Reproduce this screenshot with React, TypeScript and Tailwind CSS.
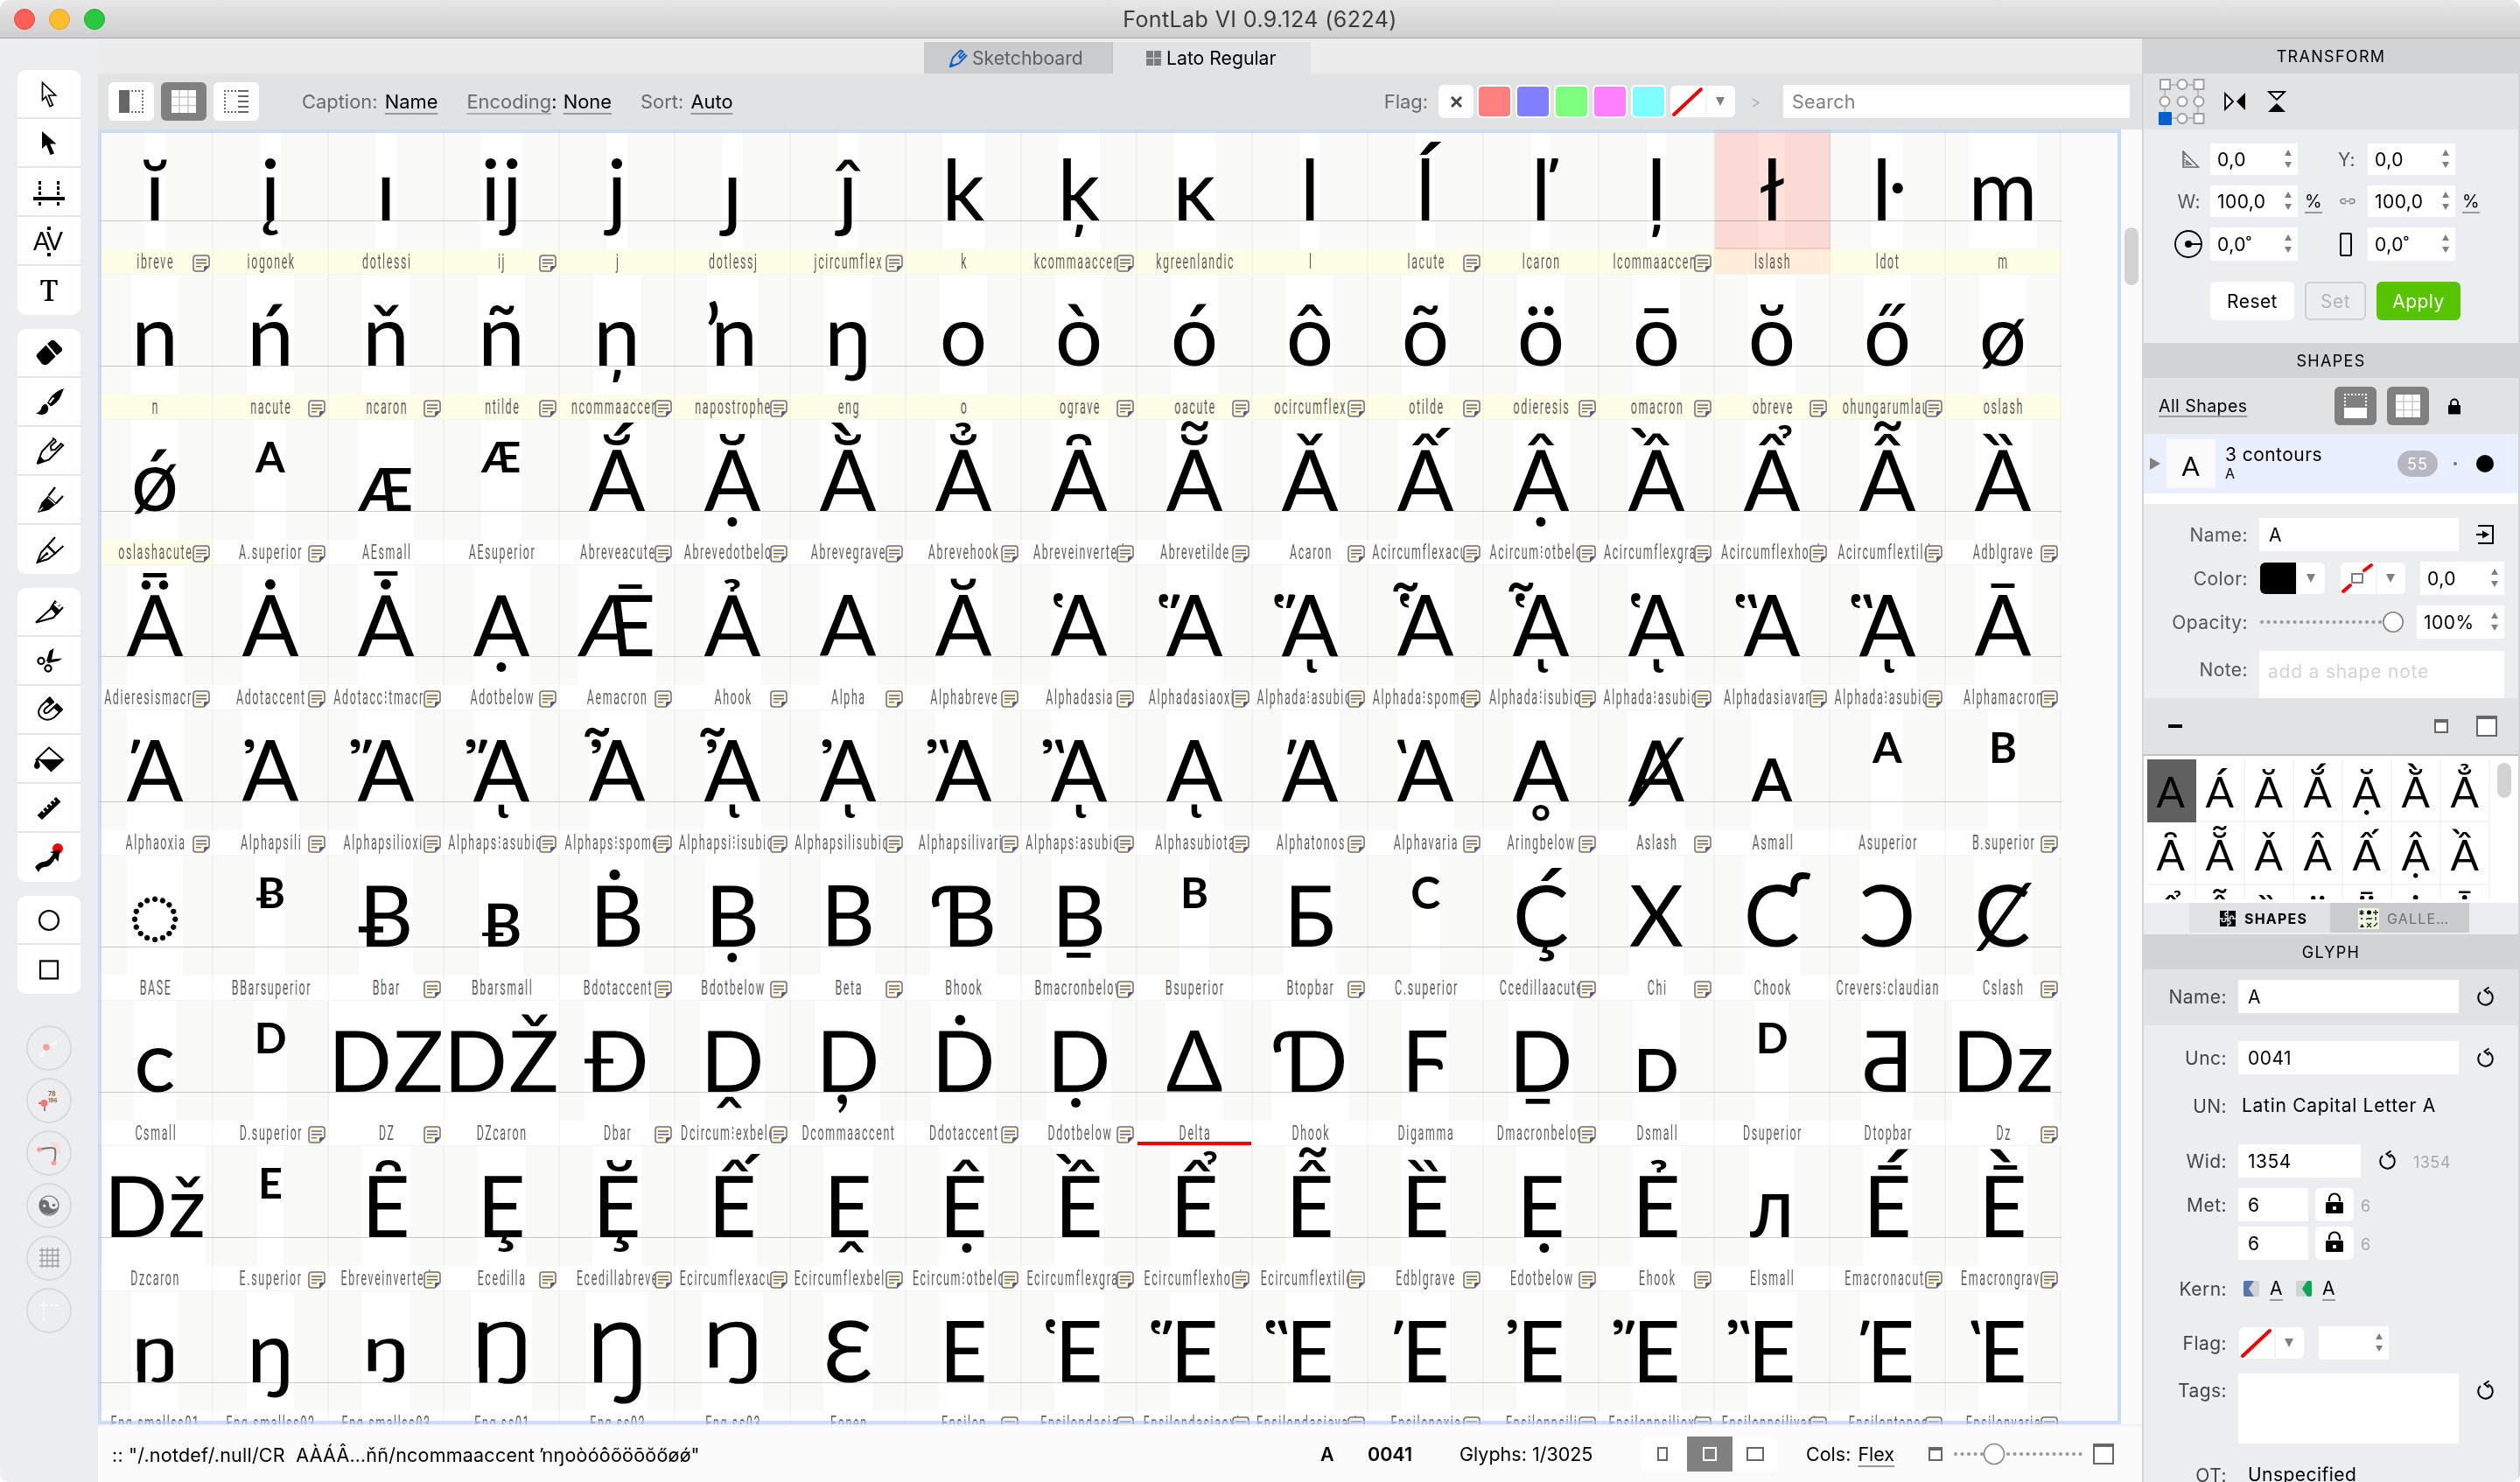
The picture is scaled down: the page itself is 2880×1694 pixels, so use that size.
import React from "react";

type Kind = "sup" | "ring" | "eng1" | "eng3" | "Eng1" | "Eng2" | "Eng3";
type Cell = { g: string; n: string; note?: boolean; kind?: Kind };

const c = (g: string, n: string, note = 0, kind?: Kind): Cell => ({ g, n, note: !!note, kind });

const ROWS: Cell[][] = [
  [
    c("ĭ", "ibreve", 1), c("į", "iogonek"), c("ı", "dotlessi"), c("ĳ", "ij", 1), c("j", "j"), c("ȷ", "dotlessj"),
    c("ĵ", "jcircumflex", 1), c("k", "k"), c("ķ", "kcommaaccent", 1), c("ĸ", "kgreenlandic"), c("l", "l"),
    c("ĺ", "lacute", 1), c("ľ", "lcaron"), c("ļ", "lcommaaccent", 1), c("ł", "lslash"), c("ŀ", "ldot"), c("m", "m"),
  ],
  [
    c("n", "n"), c("ń", "nacute", 1), c("ň", "ncaron", 1), c("ñ", "ntilde", 1), c("ņ", "ncommaaccent", 1),
    c("ŉ", "napostrophe", 1), c("ŋ", "eng"), c("o", "o"), c("ò", "ograve", 1), c("ó", "oacute", 1),
    c("ô", "ocircumflex", 1), c("õ", "otilde", 1), c("ö", "odieresis", 1), c("ō", "omacron", 1),
    c("ŏ", "obreve", 1), c("ő", "ohungarumlaut", 1), c("ø", "oslash"),
  ],
  [
    c("ǿ", "oslashacute", 1), c("ᴬ", "A.superior", 1), c("ᴁ", "AEsmall"), c("ᴭ", "AEsuperior"),
    c("Ắ", "Abreveacute", 1), c("Ặ", "Abrevedotbelow", 1), c("Ằ", "Abrevegrave", 1), c("Ẳ", "Abrevehook", 1),
    c("Ȃ", "Abreveinverted", 1), c("Ẵ", "Abrevetilde", 1), c("Ǎ", "Acaron", 1), c("Ấ", "Acircumflexacute", 1),
    c("Ậ", "Acircum⁝otbelow", 1), c("Ầ", "Acircumflexgrave", 1), c("Ẩ", "Acircumflexhook", 1),
    c("Ẫ", "Acircumflextilde", 1), c("Ȁ", "Adblgrave", 1),
  ],
  [
    c("Ǟ", "Adieresismacron", 1), c("Ȧ", "Adotaccent", 1), c("Ǡ", "Adotacc⁝tmacron", 1), c("Ạ", "Adotbelow", 1),
    c("Ǣ", "Aemacron", 1), c("Ả", "Ahook", 1), c("Α", "Alpha", 1), c("Ᾰ", "Alphabreve", 1), c("Ἁ", "Alphadasia", 1),
    c("Ἅ", "Alphadasiaoxia", 1), c("ᾍ", "Alphada⁝asubiota", 1), c("Ἇ", "Alphada⁝spomeni", 1),
    c("ᾏ", "Alphada⁝isubiota", 1), c("ᾉ", "Alphada⁝asubiota", 1), c("Ἃ", "Alphadasiavaria", 1),
    c("ᾋ", "Alphada⁝asubiota", 1), c("Ᾱ", "Alphamacron", 1),
  ],
  [
    c("\u1fbb", "Alphaoxia", 1), c("Ἀ", "Alphapsili", 1), c("Ἄ", "Alphapsilioxia", 1), c("ᾌ", "Alphaps⁝asubiota", 1),
    c("Ἆ", "Alphaps⁝spomeni", 1), c("ᾎ", "Alphapsi⁝isubiota", 1), c("ᾈ", "Alphapsilisubiota", 1),
    c("Ἂ", "Alphapsilivaria", 1), c("ᾊ", "Alphaps⁝asubiota", 1), c("ᾼ", "Alphasubiota", 1), c("Ά", "Alphatonos", 1),
    c("Ὰ", "Alphavaria", 1), c("Ḁ", "Aringbelow", 1), c("Ⱥ", "Aslash", 1), c("ᴀ", "Asmall"),
    c("ᴬ", "Asuperior"), c("ᴮ", "B.superior", 1),
  ],
  [
    c("◌", "BASE", 0, "ring"), c("ᴯ", "BBarsuperior"), c("Ƀ", "Bbar", 1), c("ᴃ", "Bbarsmall"),
    c("Ḃ", "Bdotaccent", 1), c("Ḅ", "Bdotbelow", 1), c("Β", "Beta", 1), c("Ɓ", "Bhook"), c("Ḇ", "Bmacronbelow", 1),
    c("ᴮ", "Bsuperior"), c("Ƃ", "Btopbar", 1), c("C", "C.superior", 0, "sup"), c("Ḉ", "Ccedillaacute", 1),
    c("Χ", "Chi", 1), c("Ƈ", "Chook"), c("Ↄ", "Crevers⁝claudian"), c("Ȼ", "Cslash", 1),
  ],
  [
    c("ᴄ", "Csmall"), c("ᴰ", "D.superior", 1), c("Ǳ", "DZ", 1), c("Ǆ", "DZcaron"), c("Đ", "Dbar", 1),
    c("Ḓ", "Dcircum⁝exbelow", 1), c("Ḑ", "Dcommaaccent"), c("Ḋ", "Ddotaccent", 1), c("Ḍ", "Ddotbelow", 1),
    c("Δ", "Delta"), c("Ɗ", "Dhook"), c("Ϝ", "Digamma"), c("Ḏ", "Dmacronbelow", 1), c("ᴅ", "Dsmall"),
    c("ᴰ", "Dsuperior"), c("Ƌ", "Dtopbar"), c("ǲ", "Dz", 1),
  ],
  [
    c("ǅ", "Dzcaron"), c("ᴱ", "E.superior", 1), c("Ȇ", "Ebreveinverted", 1), c("Ȩ", "Ecedilla", 1),
    c("Ḝ", "Ecedillabreve", 1), c("Ế", "Ecircumflexacute", 1), c("Ḙ", "Ecircumflexbelow", 1),
    c("Ệ", "Ecircum⁝otbelow", 1), c("Ề", "Ecircumflexgrave", 1), c("Ể", "Ecircumflexhook", 1),
    c("Ễ", "Ecircumflextilde", 1), c("Ȅ", "Edblgrave", 1), c("Ẹ", "Edotbelow", 1), c("Ẻ", "Ehook", 1),
    c("ᴫ", "Elsmall"), c("Ḗ", "Emacronacute", 1), c("Ḕ", "Emacrongrave", 1),
  ],
  [
    c("ŋ", "Eng.smallss01", 0, "eng1"), c("ŋ", "Eng.smallss02"), c("ŋ", "Eng.smallss03", 0, "eng3"),
    c("ŋ", "Eng.ss01", 0, "Eng1"), c("ŋ", "Eng.ss02", 0, "Eng2"), c("ŋ", "Eng.ss03", 0, "Eng3"), c("Ɛ", "Eopen"), c("Ε", "Epsilon", 1),
    c("Ἑ", "Epsilondasia", 1), c("Ἕ", "Epsilondasiaoxia", 1), c("Ἓ", "Epsilondasiavaria", 1), c("\u1fc9", "Epsilonoxia", 1),
    c("Ἐ", "Epsilonpsili", 1), c("Ἔ", "Epsilonpsilioxia", 1), c("Ἒ", "Epsilonpsilivaria", 1),
    c("Έ", "Epsilontonos", 1), c("Ὲ", "Epsilonvaria", 1),
  ],
];

const LATO = "font-['Lato','DejaVu_Sans',sans-serif]";

function NoteIcon() {
  return (
    <svg className="absolute right-[4px] top-[143px]" width="20" height="20" viewBox="0 0 20 20">
      <path d="M4 1h12a3 3 0 0 1 3 3v9l-6 6H4a3 3 0 0 1-3-3V4a3 3 0 0 1 3-3z" fill="#fdf6cf" stroke="#6b6a90" strokeWidth="1.500" />
      <path d="M19 13h-4.500a1.500 1.500 0 0 0-1.500 1.500V19z" fill="#565588" />
      <path d="M4 6h12M4 9.800h12M4 13.600h6" stroke="#65648f" strokeWidth="1.400" />
    </svg>
  );
}

/* Alternate forms of the Eng are built from the lowercase eng, stretched, and a dotless i for the long left stem. */
const SQUASH = "inline-block origin-top [-webkit-text-stroke:0.5px_black] [transform:translateY(14.2px)_scaleY(0.742)]";
const BIG_SQUASH = "inline-block origin-top font-light [-webkit-text-stroke:2.4px_black] [transform:translateY(-21.5px)_scale(1.34,1.035)]";
const BIG = "inline-block origin-top font-light [-webkit-text-stroke:2.2px_black] [transform:translateY(-38px)_scale(1.34,1.36)]";

function Glyph({ cell }: { cell: Cell }) {
  switch (cell.kind) {
    case "sup":
      return <span className="relative -top-[44px] text-[49px] [-webkit-text-stroke:1.8px_black]">{cell.g}</span>;
    case "ring":
      return <span className="[-webkit-text-stroke:0.8px_black]">{cell.g}</span>;
    case "eng1":
      return (
        <span className="relative inline-block">
          <span className={SQUASH}>{cell.g}</span>
          <span className="absolute left-0 top-0">ı</span>
        </span>
      );
    case "eng3":
      return <span className={SQUASH}>{cell.g}</span>;
    case "Eng1":
      return (
        <span className="relative mx-[9px] inline-block">
          <span className={BIG_SQUASH}>{cell.g}</span>
          <span className="absolute inset-0">
            <span className={`${BIG} w-full text-left`}>ı</span>
          </span>
        </span>
      );
    case "Eng2":
      return <span className={`${BIG} mx-[9px]`}>{cell.g}</span>;
    case "Eng3":
      return <span className={`${BIG_SQUASH} mx-[9px]`}>{cell.g}</span>;
    default:
      return <>{cell.g}</>;
  }
}

function GlyphCell({ cell, yellow, selected }: { cell: Cell; yellow: boolean; selected: boolean }) {
  return (
    <div className="relative h-[166px] w-[132px] shrink-0 overflow-hidden border-b border-[#f3f3f2] bg-[#f9f9f8]">
      <div className="flex h-[137px] justify-center border-r-2 border-[#f0f0ef]">
        <span className={`h-[137px] whitespace-nowrap bg-white text-[96px] leading-[134px] text-black ${LATO}`}>
          <Glyph cell={cell} />
        </span>
      </div>
      <div
        className={`flex h-[28px] items-center justify-center border-r-2 ${
          selected
            ? "border-[#fbe6d2] bg-[#ffecd9]"
            : yellow
              ? "border-[#f5f5df] bg-[#fefee6]"
              : "border-[#f7f7f7] bg-white"
        }`}
      >
        <span className="relative left-px top-px origin-center scale-x-[0.54] whitespace-nowrap font-['Roboto','DejaVu_Sans',sans-serif] text-[23px] leading-[28px] tracking-[3px] text-[#60605e]">
          {cell.n}
        </span>
      </div>
      <div className="absolute left-0 right-0 top-[104px] h-px bg-black/20" />
      {cell.note && <NoteIcon />}
      {cell.n === "Delta" && <div className="absolute bottom-0 left-0 right-[2px] h-[4px] bg-[#f40000]" />}
      {selected && (
        <div className="absolute inset-x-0 top-0 h-[137px] border-b-2 border-[#ffcdc6] bg-[#ffe0da] mix-blend-multiply" />
      )}
    </div>
  );
}

/* ---------- small shared pieces ---------- */

function Spin() {
  return (
    <svg className="-mt-[2px] ml-auto shrink-0" width="8" height="24" viewBox="0 0 8 24">
      <path d="M4 1l4 7H0zM4 22l4-7H0z" fill="#7f7f7f" />
    </svg>
  );
}

function Field({ value, className = "", spin = false }: { value: string; className?: string; spin?: boolean }) {
  return (
    <div
      className={`flex shrink-0 items-center bg-white pt-[2px] text-black ${spin ? "pl-[8px] pr-[7px]" : "pl-[11px]"} ${className}`}
    >
      {value}
      {spin && <Spin />}
    </div>
  );
}

function Reset({ className = "" }: { className?: string }) {
  return (
    <svg className={`shrink-0 ${className}`} width="22" height="24" viewBox="0 0 22 24">
      <path d="M5 7.200A8.300 8.300 0 1 0 13.500 5.600" fill="none" stroke="#000" strokeWidth="2" />
      <path d="M14.500 1.500L9.500 5l4.800 4" fill="none" stroke="#000" strokeWidth="2" />
    </svg>
  );
}

function Lock({ big = false }: { big?: boolean }) {
  return big ? (
    <svg width="20" height="25" viewBox="0 0 20 25">
      <path d="M4 10V7.500a6 6 0 0 1 12 0V10" fill="none" stroke="#000" strokeWidth="2.200" />
      <rect y="11" width="20" height="13" rx="1.500" />
      <rect x="8" y="16" width="4" height="4" rx="1" fill="#fff" />
    </svg>
  ) : (
    <svg width="14" height="19" viewBox="0 0 14 19">
      <path d="M3 9V5.500a4 4 0 0 1 8 0V9" fill="none" stroke="#000" strokeWidth="2" />
      <rect y="8" width="14" height="10.500" rx="1" />
    </svg>
  );
}

function NoneSwatch({ frame = false }: { frame?: boolean }) {
  return (
    <svg width="40" height="36" viewBox="0 0 40 36">
      <path d={frame ? "M3 33l8-7M27 9l8-6" : "M4 33L35 4"} stroke="#f40000" strokeWidth="4" strokeLinecap="round" />
      {frame && <rect x="13" y="13" width="12" height="10" fill="#fff" stroke="#7f7f7f" strokeWidth="2" />}
    </svg>
  );
}

function Drop({ children, className = "" }: { children: React.ReactNode; className?: string }) {
  return (
    <div className={`flex h-[36px] w-[74px] shrink-0 overflow-hidden rounded-[6px] bg-white ${className}`}>
      {children}
      <div className="flex flex-1 items-center justify-center border-l-2 border-[#f4f4f4] pr-[2px]">
        <svg width="10" height="10" viewBox="0 0 10 10">
          <path d="M0 0h10L5 10z" fill="#7f7f7f" />
        </svg>
      </div>
    </div>
  );
}

function GridGlyph() {
  return (
    <svg width="28" height="26" viewBox="0 0 28 26">
      <rect width="28" height="26" fill="#fff" />
      <path d="M9 0v26M19 0v26M0 8h28M0 17.500h28" stroke="#c9c9c9" strokeWidth="1.500" />
    </svg>
  );
}

function Win({ w, h }: { w: number; h: number }) {
  return (
    <svg className="shrink-0" width={w} height={h} viewBox={`0 0 ${w} ${h}`}>
      <rect x="1" y="1" width={w - 2} height={h - 2} fill="#fff" stroke="#666" strokeWidth="2" />
      <rect width={w} height="4" fill="#666" />
    </svg>
  );
}

function Header({ children }: { children: React.ReactNode }) {
  return (
    <div className="flex h-[40px] shrink-0 items-center justify-center bg-[#d2d3d5] pt-px text-[18px] tracking-[1.300px] text-black">
      {children}
    </div>
  );
}

/* ---------- left tool column ---------- */

const TOOLS: React.ReactNode[][] = [
  [
    <path d="M10.500 4.500v20l4-4 4.500 11 3.300-1.500L17.500 19h8z" fill="#fff" stroke="#000" strokeWidth="1.700" />,
    <path d="M10 4v20l5-4.500 4.500 11.500 4.500-1.500-4.800-11H26.500z" />,
    <>
      <path d="M0 25h36" stroke="#000" strokeWidth="4" />
      <path d="M7.500 5v28M28.500 5v28" stroke="#000" strokeWidth="3" strokeDasharray="4 2" />
    </>,
    <>
      <text x="0" y="28" fontSize="28" fontFamily="Lato, sans-serif" letterSpacing="-2.500">AV</text>
      <path d="M18 1v6M18 31v5" stroke="#000" strokeWidth="4" strokeDasharray="4 2" />
    </>,
    <text x="18" y="29" fontSize="33" fontWeight="500" textAnchor="middle" fontFamily="Noto Serif, DejaVu Serif, serif">T</text>,
  ],
  [
    <>
      <path d="M14.500 8.500L4.500 18.500Q2.500 21 5 23.500l5 6.500q4 2.500 7.500-.5l8-8z" />
      <path d="M16 7l4-3.500q2-1.500 4.500 0L32 11q2 2 .5 4.500L27 20z" />
    </>,
    <>
      <path d="M35 2Q26 5 20 12l-4 6.500 4 4Q27 19 31 12z" />
      <path d="M15 20q-4-.5-5.500 3.500Q9 28 3 30.500q9 3.500 13-1.500 2-3 1-6z" />
      <path d="M18.500 18.500l5-6" stroke="#fff" strokeWidth="2" />
    </>,
    <>
      <path d="M4.500 32L10 18 24 3.500M4.500 32L18 27.500 34 11M26.500 6L20 12l.5 4.500L25 16l7-7" fill="none" stroke="#000" strokeWidth="2" />
      <path d="M22 2.500l4 3M31 8.500l4 3" stroke="#000" strokeWidth="1.600" />
      <path d="M4 32.500L7.500 23l6 6z" />
    </>,
    <>
      <path d="M5 32L9.500 20.500 17 12.500l10 9L17.500 29z" />
      <path d="M25 3l-7.500 9.500M34 13l-8 8.500" stroke="#000" strokeWidth="2.200" />
      <path d="M7 30l4-4M17 15l8 7" stroke="#fff" strokeWidth="1.300" />
    </>,
    <>
      <path d="M4.500 32L9 20.500 16 13l9 8.500L17 28z" fill="#fff" stroke="#000" strokeWidth="2" />
      <path d="M25 3l-8.500 9.500 8.500 9L34.500 13M4.500 32l10-9.500" fill="none" stroke="#000" strokeWidth="2" />
      <circle cx="15.500" cy="22" r="1.800" />
    </>,
  ],
  [
    <>
      <path d="M3 29.500L21 13l5.500 7L23 24z" fill="#fff" stroke="#000" strokeWidth="2" />
      <path d="M20 13l5.500-8.500M27 20l7-8" stroke="#000" strokeWidth="2" />
      <path d="M20 13l3-4 8 7-4 4z" />
      <path d="M25 8l2-2M29 11l2-2" stroke="#000" strokeWidth="1.500" strokeDasharray="1 1" />
    </>,
    <>
      <path d="M15 18L18.500 6l5-3-3 15.500z" />
      <path d="M16 19l6-3.500 11-1-4 3L17 20z" />
      <circle cx="9" cy="17.500" r="3.600" fill="none" stroke="#000" strokeWidth="2.200" />
      <circle cx="17" cy="26" r="3.600" fill="none" stroke="#000" strokeWidth="2.200" />
    </>,
    <>
      <path d="M19 3.500l-10 9.500q-6 8 0 13 7 5.500 15 0l9-9-6-6-9.500 9q-3 2-4.500.5t.5-4.500l9.500-7.500z" fill="#fff" stroke="#000" strokeWidth="2" />
      <path d="M18.500 2.500l5 5-4 4-6-4.500zM28 11l6 6-4 4-6.500-5.500z" />
    </>,
    <>
      <path d="M4 18L18 4.500 34 18.500 20.500 31 8 18.500z" fill="#fff" stroke="#000" strokeWidth="2" />
      <path d="M7 18h27L20.500 32z" />
      <path d="M4 17.500q7 9 1 11.500-6-.5-3-7z" />
    </>,
    <>
      <path d="M4.500 26L26 5l5.500 5.500L10 31z" />
      <path d="M10 19.500l3 3M14 15.500l3 3M18 11.500l3 3M22 7.500l3 3" stroke="#fff" strokeWidth="1.800" />
    </>,
    <>
      <circle cx="28" cy="7" r="6" fill="#f40000" />
      <path d="M2 28q5-6 10-6 6-.5 11-9.500l-4-1.500L30.500 8l-2 14-3.500-4q-5 10-12 10-5 .5-7 6z" />
    </>,
  ],
  [
    <circle cx="18" cy="18" r="11" fill="none" stroke="#000" strokeWidth="2.200" />,
    <rect x="8" y="7.500" width="20" height="20" fill="none" stroke="#000" strokeWidth="2.200" />,
  ],
];

const ROUND: React.ReactNode[] = [
  <>
    <path d="M17 36q3-10 18-17" fill="none" stroke="#f8f8f8" strokeWidth="3" />
    <circle cx="23" cy="25" r="3.800" fill="#ff9c9a" />
  </>,
  <>
    <rect x="24" y="14" width="14" height="15" fill="#f7ecda" />
    <path d="M14 29h7v9" fill="none" stroke="#888" strokeWidth="2" />
    <circle cx="20.500" cy="29" r="4" fill="#fb7270" />
    <text x="25" y="21" fontSize="7" fontWeight="700" fill="#666" fontFamily="Inter">78</text>
    <text x="25" y="27.500" fontSize="6" fontWeight="700" fill="#666" fontFamily="Inter">196</text>
  </>,
  <>
    <path d="M26 14q14-4 13 14l-6-4z" fill="#f9dcd4" />
    <path d="M15 22q17-4 18 0 1 6-1 15" fill="none" stroke="#777" strokeWidth="2" />
    <circle cx="15" cy="22" r="2.800" fill="#ff9c9a" />
    <circle cx="31.500" cy="37.500" r="2.800" fill="#ff9c9a" />
  </>,
  <>
    <circle cx="26" cy="26" r="11" fill="#ecedf0" stroke="#777" strokeWidth="1.200" />
    <path d="M15.500 23a5.500 5.500 0 0 1 10.500 3 5.500 5.500 0 0 0 10.800-1A11 11 0 0 1 15 27z" fill="#6d6d6d" />
    <circle cx="20.700" cy="26.300" r="1.700" fill="#f4f4f4" />
    <circle cx="31.500" cy="25.500" r="1.700" fill="#6d6d6d" />
  </>,
  <path d="M15 17h23M15 23h23M15 29h23M15 35h23M18 14v23M24 14v23M30 14v23M36 14v23" stroke="#9d9d9d" strokeWidth="1.300" />,
  <path d="M15 20h24M20 15v24" stroke="#fafafa" strokeWidth="2" strokeDasharray="4 2" />,
];

function ToolColumn() {
  return (
    <div className="flex w-[112px] shrink-0 flex-col items-center bg-[#ecedf0] pt-[36px]">
      {TOOLS.map((group, i) => (
        <div key={i} className="mb-[16px] w-[72px] divide-y-2 divide-[#e4e4e5] overflow-hidden rounded-[10px] bg-white">
          {group.map((icon, k) => (
            <div key={k} className="flex h-[56px] items-center justify-center pt-[2px]">
              <svg width="36" height="36" viewBox="0 0 36 36">
                {icon}
              </svg>
            </div>
          ))}
        </div>
      ))}
      <div className="mt-[20px] flex flex-col gap-[8px]">
        {ROUND.map((icon, i) => (
          <svg key={i} width="52" height="52" viewBox="0 0 52 52">
            <circle cx="26" cy="26" r="25" fill="#ecedee" stroke="#d9d9da" strokeWidth="1.800" />
            {icon}
          </svg>
        ))}
      </div>
    </div>
  );
}

/* ---------- centre ---------- */

const LINK = "underline decoration-[#9a9a9a] decoration-2 underline-offset-[5px] text-black";

function Toolbar() {
  return (
    <div className="flex h-[64px] shrink-0 items-center bg-[#e1e2e4] pl-[12px] pr-[14px] text-[21.900px] text-[#6a6a6a]">
      <div className="flex gap-[8px]">
        <div className="flex h-[44px] w-[52px] items-center justify-center rounded-[6px] bg-white">
          <svg width="28" height="26" viewBox="0 0 28 26">
            <rect width="12" height="26" fill="#666" />
            <path d="M14 1h13v24H14" fill="none" stroke="#666" strokeWidth="1.800" strokeDasharray="2 2" />
          </svg>
        </div>
        <div className="flex h-[44px] w-[52px] items-center justify-center rounded-[6px] bg-[#808080]">
          <GridGlyph />
        </div>
        <div className="flex h-[44px] w-[52px] items-center justify-center rounded-[6px] bg-white">
          <svg width="28" height="26" viewBox="0 0 28 26">
            <path d="M14 1H1v24h13" fill="none" stroke="#666" strokeWidth="1.800" strokeDasharray="2 2" />
            <path d="M16 1h12M16 7h12M16 13h12M16 19h12M16 25h12" stroke="#666" strokeWidth="2" />
          </svg>
        </div>
      </div>
      <div className="ml-[49px] flex gap-[33px] pt-[1px]">
        <span>Caption: <span className={`ml-[2px] ${LINK}`}>Name</span></span>
        <span>
          <span className="underline decoration-[#b0b0b0] decoration-2 underline-offset-[5px]">Encoding</span>
          <span className="text-black">: </span>
          <span className={`ml-px ${LINK}`}>None</span>
        </span>
        <span>Sort: <span className={`ml-[2px] ${LINK}`}>Auto</span></span>
      </div>
      <div className="ml-auto flex items-center gap-[4px]">
        <span className="mr-[8px] pt-px">Flag:</span>
        <div className="flex h-[38px] w-[40px] items-center justify-center rounded-[6px] bg-white">
          <svg width="13" height="13" viewBox="0 0 13 13">
            <path d="M1 1l11 11M12 1L1 12" stroke="#444" strokeWidth="3" />
          </svg>
        </div>
        <div className="h-[38px] w-[40px] rounded-[6px] border-2 border-white bg-[#ff807f]" />
        <div className="h-[38px] w-[40px] rounded-[6px] border-2 border-white bg-[#807fff]" />
        <div className="h-[38px] w-[40px] rounded-[6px] border-2 border-white bg-[#80ff7f]" />
        <div className="h-[38px] w-[40px] rounded-[6px] border-2 border-white bg-[#ff80ff]" />
        <div className="h-[38px] w-[40px] rounded-[6px] border-2 border-white bg-[#7fffff]" />
        <Drop className="ml-[1px]">
          <NoneSwatch />
        </Drop>
        <svg className="ml-[15px] mr-[23px] mt-[2px]" width="9" height="11" viewBox="0 0 9 11">
          <path d="M1 1l7 4.500L1 10" fill="none" stroke="#b3b3b3" strokeWidth="1.600" />
        </svg>
        <div className="flex h-[38px] w-[396px] items-center bg-white pl-[10px] text-[21.500px] tracking-[0.200px] text-[#808080]">
          Search
        </div>
      </div>
    </div>
  );
}

function StatusBar() {
  return (
    <div className="flex h-[66px] shrink-0 items-center border-t-2 border-[#f0f0f1] bg-[#fafafa] text-[21.500px] text-black">
      <div className="w-[1381px] whitespace-pre pl-[16px] pt-[2px] tracking-[0.220px]">
        :: "/.notdef/.null/CR  AÀÁÂ…ňñ/ncommaaccent ŉŋoòóôõöōŏőøǿ"
      </div>
      <div className="ml-[16px] w-[54px] font-semibold">A</div>
      <div className="w-[105px] font-semibold">0041</div>
      <div className="w-[208px]">Glyphs: 1/3025</div>
      <div className="flex h-[40px] w-[156px] overflow-hidden rounded-[6px] bg-white">
        <div className="flex w-[52px] items-center justify-center pr-[4px]">
          <div className="h-[16px] w-[12px] border-2 border-[#666]" />
        </div>
        <div className="flex w-[52px] items-center justify-center bg-[#808080]">
          <div className="h-[16px] w-[16px] border-2 border-white" />
        </div>
        <div className="flex w-[52px] items-center justify-center">
          <div className="h-[16px] w-[20px] border-2 border-[#666]" />
        </div>
      </div>
      <div className="ml-[32px] w-[140px]">Cols: <span className={`ml-[2px] ${LINK}`}>Flex</span></div>
      <Win w={16} h={16} />
      <svg className="mx-[12px]" width="148" height="26" viewBox="0 0 148 26">
        <path d="M3 13h143" stroke="#999" strokeWidth="4" strokeLinecap="round" strokeDasharray="0.100 7.400" />
        <circle cx="47" cy="13" r="11.500" fill="#fff" stroke="#888" strokeWidth="1.600" />
      </svg>
      <Win w={24} h={24} />
    </div>
  );
}

function Center() {
  return (
    <div className="flex w-[2336px] shrink-0 flex-col">
      <div className="flex h-[40px] shrink-0 items-end bg-[#ececec] pl-[944px] text-[21.200px]">
        <div className="flex h-[36px] w-[216px] items-center border-r border-[#c0c1c3] bg-[#cacbcd] pl-[28px] pt-px text-[#5f5f5f]">
          <svg className="mr-[5px]" width="22" height="22" viewBox="0 0 22 22">
            <path d="M1.500 20.500L5 10l8-8M1.500 20.500L12 16.500 21 7M17 2l-5 6 1.500 2.500L19 5M13 1l4 3" fill="none" stroke="#0a5fcb" strokeWidth="1.900" />
            <path d="M1 21l2-6 4 4z" fill="#0a5fcb" />
          </svg>
          Sketchboard
        </div>
        <div className="flex h-[36px] w-[226px] items-center bg-[#e1e2e4] pl-[38px] pt-px text-black">
          <svg className="mr-[6px]" width="17" height="17" viewBox="0 0 17 17">
            <path d="M0 0h8v8H0zM9 0h8v8H9zM0 9h8v8H0zM9 9h8v8H9z" fill="#7d7d7d" />
          </svg>
          Lato Regular
        </div>
      </div>
      <Toolbar />
      <div className="flex h-[1480px] shrink-0 bg-[#fafafa]">
        <div className="relative h-[1480px] w-[2312px] overflow-hidden">
          {ROWS.map((row, r) => (
            <div key={r} className="flex">
              {row.map((cell, k) => (
                <GlyphCell key={k} cell={cell} yellow={r < 2 || (r === 2 && k === 0)} selected={cell.n === "lslash"} />
              ))}
            </div>
          ))}
          <div className="absolute inset-0 border-4 border-[#b4cbf2]/65" />
        </div>
        <div className="flex w-[24px] justify-center pt-[112px]">
          <div className="h-[66px] w-[16px] rounded-full bg-[#d2d2d2]" />
        </div>
      </div>
      <StatusBar />
    </div>
  );
}

/* ---------- right panels ---------- */

const PCT = <span className="w-[18px] text-[20px] underline decoration-[#9a9a9a] decoration-2 underline-offset-[5px]">%</span>;

function Transform() {
  return (
    <>
      <Header>TRANSFORM</Header>
      <div className="flex h-[64px] shrink-0 items-center bg-[#e1e2e4] pl-[16px]">
        <svg width="56" height="56" viewBox="0 0 56 56">
          <path d="M8 9h38v38H8z" fill="none" stroke="#bbb" strokeWidth="2" />
          <g fill="#fff" stroke="#a0a0a0" strokeWidth="2">
            <rect x="3" y="3" width="11" height="11" />
            <rect x="41.500" y="3" width="11" height="11" />
            <rect x="41.500" y="42" width="11" height="11" />
            <circle cx="28" cy="8.500" r="5.500" />
            <circle cx="8" cy="28" r="5.500" />
            <circle cx="28" cy="28" r="5.500" />
            <circle cx="47" cy="28" r="5.500" />
            <circle cx="28" cy="47.500" r="5.500" />
          </g>
          <rect x="1" y="40" width="15" height="15" rx="1" fill="#0260cf" />
        </svg>
        <svg className="ml-[20px]" width="24" height="22" viewBox="0 0 24 22">
          <path d="M1 2v18l9-9z" fill="#fff" stroke="#000" strokeWidth="1.800" />
          <path d="M24 1v20l-10-10z" />
        </svg>
        <svg className="ml-[25px]" width="22" height="24" viewBox="0 0 22 24">
          <path d="M2 1h18l-9 9z" fill="#fff" stroke="#000" strokeWidth="1.800" />
          <path d="M1 24h20L11 14z" />
        </svg>
      </div>
      <div className="flex h-[244px] shrink-0 flex-col pt-[16px]">
        <div className="flex h-[36px] items-center">
          <div className="flex w-[76px] justify-end pr-[12px]">
            <svg width="20" height="20" viewBox="0 0 20 20">
              <path d="M1 1l17.500 18H1zM5 12l5 4H5z" fill="none" stroke="#666" strokeWidth="1.500" />
              <path d="M2.500 4v13" stroke="#666" strokeWidth="2" strokeDasharray="1.500 1.500" />
            </svg>
          </div>
          <Field value="0,0" spin className="h-[36px] w-[100px]" />
          <span className="w-[80px] pl-[46px] pt-[1px] text-[#555]">Y:</span>
          <Field value="0,0" spin className="h-[36px] w-[100px]" />
        </div>
        <div className="mt-[12px] flex h-[36px] items-center">
          <div className="w-[76px] pr-[11px] pt-[1px] text-right text-[#555]">W:</div>
          <Field value="100,0" spin className="h-[36px] w-[100px]" />
          <div className="flex w-[80px] items-center pl-[8px]">
            {PCT}
            <svg className="ml-[22px]" width="18" height="8" viewBox="0 0 18 8">
              <path d="M7 1.500H3.500a2.500 2.500 0 0 0 0 5H7M11 1.500h3.500a2.500 2.500 0 0 1 0 5H11M5.500 4h7" fill="none" stroke="#808080" strokeWidth="1.500" />
            </svg>
          </div>
          <Field value="100,0" spin className="h-[36px] w-[100px]" />
          <div className="ml-[8px]">{PCT}</div>
        </div>
        <div className="mt-[12px] flex h-[38px] items-center">
          <div className="flex w-[76px] justify-end pr-[9px]">
            <svg width="32" height="32" viewBox="0 0 32 32">
              <circle cx="16" cy="16" r="15" fill="none" stroke="#000" strokeWidth="1.800" />
              <circle cx="16" cy="16" r="4" />
              <path d="M16 16h15" stroke="#000" strokeWidth="2" />
            </svg>
          </div>
          <Field value="0,0˚" spin className="h-[38px] w-[100px]" />
          <div className="w-[80px] pl-[48px]">
            <div className="h-[27px] w-[14px] rounded-[2px] border-2 border-black" />
          </div>
          <Field value="0,0˚" spin className="h-[38px] w-[100px]" />
        </div>
        <div className="mt-[24px] flex h-[44px] gap-[12px] pl-[76px]">
          <div className="flex w-[96px] items-center justify-center rounded-[6px] bg-white pt-px text-black">Reset</div>
          <div className="flex w-[70px] items-center justify-center rounded-[6px] border-2 border-[#cfd0d2] pt-px text-[#b5b5b5]">Set</div>
          <div className="flex w-[96px] items-center justify-center rounded-[6px] bg-[#57c400] pt-px text-white">Apply</div>
        </div>
      </div>
    </>
  );
}

const MINI = ["A", "Á", "Ă", "Ắ", "Ặ", "Ằ", "Ẳ", "Ȃ", "Ẵ", "Ǎ", "Â", "Ấ", "Ậ", "Ầ", "Ẩ", "Ẫ", "Ȁ", "Ä", "Ǟ", "Ȧ", "Ǡ"];

const SLABEL = "w-[132px] pr-[13px] pt-[1px] text-right text-[#555]";
const GLABEL = "w-[108px] shrink-0 pr-[13px] pt-[1px] text-right text-[#444]";

function Shapes() {
  return (
    <>
      <Header>SHAPES</Header>
      <div className="flex h-[64px] shrink-0 items-center bg-[#e1e2e4] pl-[17px] text-black">
        <span className="w-[201px] pt-[2px] text-[19.500px] underline decoration-[#9a9a9a] decoration-2 underline-offset-[4px]">
          All Shapes
        </span>
        <div className="flex h-[44px] w-[48px] items-center justify-center rounded-[6px] bg-[#808080]">
          <svg width="26" height="28" viewBox="0 0 26 28">
            <rect y="16" width="26" height="12" fill="#fff" />
            <path d="M1 14V1h24v13" fill="none" stroke="#fff" strokeWidth="2" strokeDasharray="2 2" />
          </svg>
        </div>
        <div className="ml-[12px] mr-[22px] flex h-[44px] w-[48px] items-center justify-center rounded-[6px] bg-[#808080]">
          <GridGlyph />
        </div>
        <Lock />
      </div>
      <div className="flex h-[68px] shrink-0 items-center bg-[#e9effe] pl-[7px] text-black">
        <svg width="12" height="14" viewBox="0 0 12 14">
          <path d="M0 0l12 7-12 7z" fill="#7f7f7f" />
        </svg>
        <div className={`ml-[7px] flex h-[56px] w-[56px] items-center justify-center bg-[#fafafa] pt-[4px] text-[30px] ${LATO}`}>A</div>
        <div className="ml-[11px] w-[197px]">
          <div className="leading-[23px]">3 contours</div>
          <div className="pb-px text-[16px] leading-[21px]">A</div>
        </div>
        <div className="flex h-[30px] w-[46px] items-center justify-center rounded-full bg-[#b7b6c2] text-[18px] tracking-[1px] text-white">55</div>
        <div className="ml-[18px] h-[4px] w-[4px] rounded-full bg-[#777]" />
        <div className="ml-[22px] h-[20px] w-[20px] rounded-full bg-black" />
      </div>
      <div className="h-[12px] shrink-0 bg-white" />
      <div className="flex h-[222px] shrink-0 flex-col pt-[16px]">
        <div className="flex h-[38px] items-center">
          <div className={SLABEL}>Name:</div>
          <Field value="A" className="h-[38px] w-[228px]" />
          <svg className="ml-[20px]" width="21" height="22" viewBox="0 0 21 22">
            <path d="M2 1h17v20H2" fill="none" stroke="#000" strokeWidth="2" />
            <path d="M0 11h9" stroke="#000" strokeWidth="2.200" />
            <path d="M7 6.500l8 4.500-8 4.500z" />
          </svg>
        </div>
        <div className="mt-[12px] flex h-[38px] items-center">
          <div className={SLABEL}>Color:</div>
          <Drop className="ml-[1px]">
            <div className="w-[41px] bg-black" />
          </Drop>
          <Drop className="ml-[18px]">
            <NoneSwatch frame />
          </Drop>
          <Field value="0,0" spin className="ml-[17px] h-[38px] w-[96px]" />
        </div>
        <div className="mt-[12px] flex h-[38px] items-center">
          <div className={SLABEL}>Opacity:</div>
          <svg width="168" height="26" viewBox="0 0 168 26">
            <path d="M3 13h142" stroke="#999" strokeWidth="4" strokeLinecap="round" strokeDasharray="0.100 7.400" />
            <circle cx="153" cy="13" r="11.200" fill="#fff" stroke="#808080" strokeWidth="1.600" />
          </svg>
          <Field value="100%" spin className="ml-[12px] h-[38px] w-[100px]" />
        </div>
        <div className="mt-[14px] flex h-[54px]">
          <div className={`${SLABEL} pt-[6px]`}>Note:</div>
          <div className="h-[54px] w-[280px] bg-white pl-[10px] pt-[8px] tracking-[0.800px] text-[#d3d3d3]">add a shape note</div>
        </div>
      </div>
      <div className="flex h-[66px] shrink-0 items-center border-b-2 border-[#c0c1c3] bg-[#e1e2e4] pl-[28px]">
        <div className="mr-[288px] h-[4px] w-[16px] bg-black" />
        <Win w={16} h={16} />
        <div className="w-[32px]" />
        <Win w={24} h={24} />
      </div>
      <div className="flex h-[168px] shrink-0 bg-white pl-[4px] pt-[4px]">
        <div className="flex h-[160px] w-[392px] flex-wrap content-start overflow-hidden">
          {MINI.map((g, i) => (
            <div
              key={i}
              className={`h-[72px] w-[56px] text-center text-[48px] leading-[73px] text-black ${LATO} ${
                i === 0 ? "bg-[#606060] pr-[2px]" : "border-b-2 border-r-2 border-[#f4f4f4] bg-white"
              }`}
            >
              {g}
            </div>
          ))}
        </div>
        <div className="ml-[8px] mt-[4px] h-[40px] w-[16px] rounded-full bg-[#d2d2d2]" />
      </div>
      <div className="flex h-[36px] shrink-0 items-start pl-[52px] text-[16px] tracking-[1.200px]">
        <div className="flex h-[34px] w-[161px] items-center bg-[#e1e2e4] pl-[35px] pt-px font-bold text-black">
          <svg className="mr-[10px]" width="18" height="18" viewBox="0 0 18 18">
            <rect width="18" height="18" />
            <path d="M9 0v3q-3-2-3 1t3 1v4M0 9h3q-2 4 1.500 3.500T6 9h3M9 18v-3q4 1 3-2t-3-1V9M18 9h-3q1-3-1.500-3T12 9H9" fill="none" stroke="#e1e2e4" strokeWidth="1.500" />
          </svg>
          SHAPES
        </div>
        <div className="flex h-[34px] w-[159px] items-center bg-[#cacbcd] pl-[32px] pt-px text-[#6f6f6f]">
          <svg className="mr-[9px]" width="24" height="24" viewBox="0 0 24 24">
            <rect width="24" height="24" fill="#ecfbe0" />
            <circle cx="12.500" cy="5" r="2.500" />
            <path d="M4 2v6M1.500 3.500l5 3M6.500 3.500l-5 3M20 2v6M17 5h6M20 10v4M9 13q2-2 4-1t3-1M10 17l5 5M15 17l-5 5M18 21l4-4" fill="none" stroke="#222" strokeWidth="1.400" />
            <path d="M2 22l2.500-4 2.500 4z" />
            <circle cx="4" cy="12" r="1" />
          </svg>
          GALLE…
        </div>
      </div>
    </>
  );
}

function GlyphPanel() {
  return (
    <>
      <Header>GLYPH</Header>
      <div className="flex h-[64px] shrink-0 items-center bg-[#e1e2e4] pb-[2px]">
        <div className={GLABEL}>Name:</div>
        <Field value="A" className="h-[38px] w-[252px]" />
        <Reset className="ml-[20px]" />
      </div>
      <div className="mt-[18px] flex h-[38px] shrink-0 items-center">
        <div className={GLABEL}>Unc:</div>
        <Field value="0041" className="h-[38px] w-[252px]" />
        <Reset className="ml-[20px]" />
      </div>
      <div className="mt-[17px] flex h-[38px] shrink-0 items-center">
        <div className={GLABEL}>UN:</div>
        <span className="pl-[4px] tracking-[0.700px] text-black">Latin Capital Letter A</span>
      </div>
      <div className="mt-[25px] flex h-[38px] shrink-0 items-center">
        <div className={GLABEL}>Wid:</div>
        <Field value="1354" className="h-[38px] w-[140px]" />
        <Reset className="mb-[2px] ml-[20px]" />
        <span className="ml-[18px] pt-[2px] text-[18px] text-[#a8a8a8]">1354</span>
      </div>
      {["Met:", ""].map((label, i) => (
        <div key={i} className={`flex h-[38px] shrink-0 items-center ${i ? "mt-[6px]" : "mt-[12px]"}`}>
          <div className={GLABEL}>{label}</div>
          <Field value="6" className="h-[38px] w-[80px]" />
          <div className="ml-[8px] flex h-[38px] w-[44px] items-center justify-center rounded-[6px] bg-white pb-[3px]">
            <Lock big />
          </div>
          <span className="ml-[8px] pt-[2px] text-[18px] text-[#a8a8a8]">6</span>
        </div>
      ))}
      <div className="mt-[14px] flex h-[38px] shrink-0 items-center">
        <div className={GLABEL}>Kern:</div>
        <svg className="ml-[6px]" width="18" height="18" viewBox="0 0 18 18">
          <rect width="18" height="18" rx="2" fill="#d2d3d3" />
          <path d="M2 0h10L6 9l6 9H2a2 2 0 0 1-2-2V2a2 2 0 0 1 2-2z" fill="#5577ab" />
        </svg>
        <span className={`ml-[12px] w-[30px] ${LINK}`}>A</span>
        <svg width="18" height="18" viewBox="0 0 18 18">
          <rect width="18" height="18" rx="2" fill="#d2d3d3" />
          <path d="M16 0h-3L7 9l6 9h3a2 2 0 0 0 2-2V2a2 2 0 0 0-2-2z" fill="#06a853" />
        </svg>
        <span className={`ml-[12px] ${LINK}`}>A</span>
      </div>
      <div className="mt-[24px] flex h-[38px] shrink-0 items-center">
        <div className={GLABEL}>Flag:</div>
        <Drop className="ml-[1px]">
          <NoneSwatch />
        </Drop>
        <Field value="" spin className="ml-[17px] h-[38px] w-[80px]" />
      </div>
      <div className="mt-[16px] flex h-[80px] shrink-0">
        <div className={`${GLABEL} pt-[4px]`}>Tags:</div>
        <div className="h-[80px] w-[252px] bg-white" />
        <Reset className="ml-[20px] mt-[7px]" />
      </div>
      <div className="mt-[20px] flex h-[32px] shrink-0 items-center">
        <div className={GLABEL}>OT:</div>
        <span className="pl-[11px] text-black">Unspecified</span>
      </div>
    </>
  );
}

export default function App() {
  return (
    <div className="bg-white">
      <div className="flex h-[1694px] w-[2880px] flex-col overflow-hidden rounded-[10px] font-['Inter','Noto_Sans',sans-serif]">
        <div className="relative flex h-[44px] shrink-0 items-center justify-center border-b border-[#a9a9a9] bg-gradient-to-b from-[#e7e7e7] to-[#cecece] pt-[3px] text-[25px] tracking-[0.400px] text-[#3c3c3c]">
          <div className="absolute left-[16px] top-[10px] flex gap-[16px]">
            <div className="h-[24px] w-[24px] rounded-full border border-[#e2463f] bg-[#ff5f57]" />
            <div className="h-[24px] w-[24px] rounded-full border border-[#dea123] bg-[#ffbd2e]" />
            <div className="h-[24px] w-[24px] rounded-full border border-[#1aab29] bg-[#28c940]" />
          </div>
          <span>FontLab VI 0.9.124 (6224)</span>
        </div>
        <div className="flex h-[1650px]">
          <ToolColumn />
          <Center />
          <div className="flex h-[1650px] w-[432px] flex-col overflow-hidden border-x-2 border-[#d2d3d5] bg-[#ecedf0] text-[21px] tracking-[0.450px]">
            <Transform />
            <Shapes />
            <GlyphPanel />
          </div>
        </div>
      </div>
    </div>
  );
}
